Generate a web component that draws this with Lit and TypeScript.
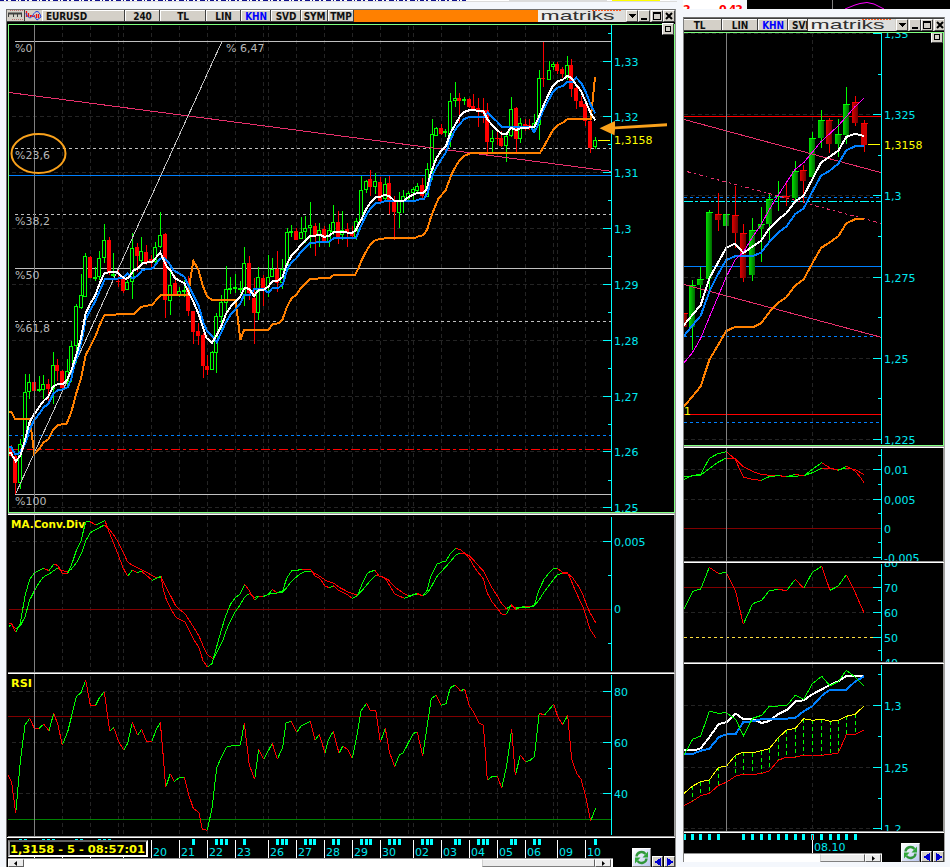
import { LitElement, html, svg, css } from "lit";
import { customElement, property } from "lit/decorators.js";

type Pt = [number, number];
type Bar = [string, number, number, number, number, number];

// Series are stored in thirds of a pixel relative to an origin.
const UNIT = 3;
const pts = (ox: number, oy: number, s: string): Pt[] =>
  s.trim().split(/\s+/).map((p) => {
    const [x, y] = p.split(",").map(Number);
    return [ox + x / UNIT, oy + y / UNIT] as Pt;
  });
const bars = (ox: number, oy: number, s: string): Bar[] =>
  s.trim().split(/\s*;\s*/).filter(Boolean).map((row) => {
    const f = row.split(/[\s,]+/);
    const n = f.slice(1).map(Number);
    return [f[0], ox + Math.floor(n[0] / UNIT), ...n.slice(1).map((v) => Math.round(oy + v / UNIT))] as unknown as Bar;
  });
const path = (p: Pt[]) => p.map(([x, y], i) => (i ? "L" : "M") + x.toFixed(1) + " " + y.toFixed(1)).join("");
const line = (p: Pt[], cls: string) => svg`<path class=${"ln " + cls} d=${path(p)}></path>`;
const trend = (p: Pt[]) => {
  let up = "", down = "", rising = true;
  for (let i = 1; i < p.length; i++) {
    const dy = p[i][1] - p[i - 1][1];
    if (Math.abs(dy) > 0.01) rising = dy < 0;
    const seg = path([p[i - 1], p[i]]);
    if (rising) up += seg; else down += seg;
  }
  return svg`<path class="ln up" d=${up}></path><path class="ln down" d=${down}></path>`;
};
const hl = (x1: number, x2: number, y: number, cls: string) => svg`<line class=${cls} x1=${x1} x2=${x2} y1=${y + 0.5} y2=${y + 0.5}></line>`;
const vl = (x: number, y1: number, y2: number, cls: string) => svg`<line class=${cls} x1=${x + 0.5} x2=${x + 0.5} y1=${y1} y2=${y2}></line>`;
const label = (x: number, y: number, t: string, cls = "cy") => svg`<text class=${cls} x=${x} y=${y}>${t}</text>`;
const title = (x: number, y: number, w: number, t: string) => svg`<text class="b" x=${x} y=${y} textLength=${w} lengthAdjust="spacingAndGlyphs">${t}</text>`;
const axis = (x: number, y1: number, y2: number, major: number[], minor: number[]) => svg`
  ${vl(x, y1, y2, "axis")}
  ${major.map((y) => hl(x - 8, x, y, "axis"))}
  ${minor.map((y) => hl(x - 3, x, y, "axis"))}`;

const GRID_X = [62, 90, 118, 123, 151, 179, 207, 235, 263, 268, 296, 324, 352, 380, 408, 413, 441, 469, 497, 525, 553, 557, 585];

const LEFT_BARS: Bar[] = [
  ...bars(0, 200, `r 33 735 740 768 772; r 47 762 768 850 883; g 61 718 733 848 868; g 75 522 577 725 735; g 89 522 547 575 598;
  r 103 547 547 572 572; g 117 528 568 572 576; g 131 525 553 570 598; r 145 537 552 567 607; g 159 457 495 567 613; r 173 477 495 514 543;
  r 187 510 514 565 570; g 201 477 514 545 560; g 215 422 438 514 545; g 229 312 319 438 490; g 243 222 286 325 328; g 257 160 168 290 290;
  r 272 168 171 233 233; g 285 200 230 233 243; g 299 154 174 230 240; g 313 72 121 175 190; r 327 110 121 220 225; g 341 160 221 227 232;
  r 355 205 242 245 260; r 369 235 238 272 280; g 383 240 247 269 270; g 397 98 145 247 298; r 411 130 141 168 215; g 425 110 153 182 190;
  r 439 135 156 185 195; r 453 165 177 185 205; g 467 125 142 186 195; g 481 37 106 140 145; r 495 98 102 301 355; g 510 210 255 302 345;
  r 525 227 250 283 283; g 539 262 273 284 290; g 553 240 270 274 292; r 566 228 260 333 348; r 580 333 333 395 433; r 595 370 394 407 435;
  r 609 400 405 497 533; r 621 465 497 510 526; g 636 453 457 509 509; g 650 340 348 460 518; g 664 285 307 350 390; g 678 198 268 308 335`),
  ...bars(200, 190, `g 92 260 294 297 312; g 106 252 292 296 308; g 120 272 293 296 310; g 134 170 219 316 348; r 148 198 219 310 330; r 162 263 323 368 461;
  g 176 232 262 370 390; r 190 255 264 300 348; g 205 195 261 292 320; g 218 205 236 262 262; r 233 183 236 278 305; g 247 207 236 278 297;
  g 261 113 127 240 240; g 275 105 124 127 140; r 289 114 122 150 150; g 303 82 125 148 148; g 317 78 114 125 158; g 331 36 106 115 173;
  r 345 98 108 138 197; g 359 100 121 137 170; r 373 108 117 158 158; g 387 103 121 155 170; g 401 45 97 125 135; r 415 62 97 145 162;
  g 428 62 121 134 150; r 442 100 118 125 170; r 457 107 125 138 140; g 470 85 94 142 150; g 484 -42 1 94 94; g 498 -30 -27 1 8;
  r 511 -60 -33 -10 18; g 526 -50 -27 -10 12; r 541 -40 -24 33 36; g 556 -36 -18 28 32; r 569 -42 -22 30 72; r 583 18 32 66 149;
  g 597 5 32 68 114; g 611 0 18 36 68; g 625 4 8 28 30; g 639 -8 -2 8 30; g 653 -20 -12 2 10`),
  ...bars(420, 30, `r 7 445 465 497 505; g 21 400 418 500 500; g 36 267 313 420 450; g 49 290 295 317 317; r 63 283 294 312 315; g 77 297 304 310 322;
  g 91 190 213 318 350; g 105 156 205 214 230; r 119 190 205 212 278; g 133 200 207 212 225; r 147 203 207 231 235; r 161 192 228 236 240;
  r 175 205 235 245 290; r 189 205 240 250 278; r 203 220 240 335 377; g 217 300 325 335 367; r 232 296 323 326 345; r 245 303 324 347 352;
  g 260 310 318 347 395; g 274 200 238 317 320; r 288 230 234 327 366; g 302 263 280 328 340; r 316 267 282 292 302; r 329 267 285 290 300;
  g 343 252 280 292 310; g 357 120 144 285 330; r 371 35 144 148 170; g 387 93 121 149 150; g 399 96 103 111 120; r 413 95 102 123 133;
  r 428 110 118 131 145; g 442 78 105 140 150; r 455 88 105 176 200; r 469 170 175 213 237; r 483 197 213 230 230; r 497 218 222 272 287;
  r 512 268 272 353 368; g 526 320 331 352 357`),
];

const WHITE: Pt[] = [
  ...pts(0, 200, `27,760 33,760 47,783 61,768 75,720 89,665 103,642 117,622 131,602 145,590 159,560 173,552 190,552 201,540 215,508 229,465 243,415 257,340 272,308 285,288 299,250 313,220 327,217 350,216 363,228 377,237 387,232 400,212 413,206 427,190 457,185 470,170 481,157 492,182 500,200 512,212 525,235 553,250 567,280 580,305 597,345`),
  ...pts(200, 190, `9,413 20,445 36,458 50,435 64,408 78,372 92,350 106,335 120,322 134,293 148,297 162,318 176,300 190,300 205,290 218,273 233,272 247,262 261,222 275,196 289,182 303,165 317,150 331,138 345,137 360,134 373,141 387,137 402,126 425,127 456,128 466,122 476,102 484,90 498,58 512,37 526,22 541,20 556,14 570,20 583,32 597,33 611,32 627,20 641,13 655,8`),
  ...pts(420, 30, `0,489 10,489 21,475 32,430 49,385 63,363 77,350 91,310 105,285 119,260 133,246 147,241 189,242 203,270 217,285 232,300 245,312 260,312 272,293 288,300 302,295 343,291 357,260 371,225 387,190 399,167 413,154 428,149 442,137 455,145 469,165 483,183 497,215 512,250 526,270`),
];
const BLUE: Pt[] = [
  ...pts(0, 200, `27,740 33,740 45,762 55,762 68,745 78,725 90,685 103,660 117,642 131,622 145,612 159,583 173,570 190,568 203,562 213,540 222,500 238,450 250,400 257,358 272,328 285,305 299,272 315,237 340,236 370,235 383,220 395,233 403,233 415,225 427,210 458,205 480,176 493,173 505,187 520,210 553,230 567,260 581,287 596,318`),
  ...pts(200, 190, `10,397 22,425 36,438 50,457 64,427 78,396 92,373 106,358 120,343 132,315 150,314 162,298 190,298 205,308 218,293 236,293 249,282 262,237 275,217 289,205 303,185 317,171 331,159 355,157 385,156 402,144 440,144 468,144 482,110 497,78 512,54 527,39 541,38 556,33 585,34 645,33`),
  ...pts(420, 30, `0,507 12,507 23,488 35,440 50,410 63,390 77,368 91,330 105,300 119,282 133,267 147,261 192,261 203,248 217,262 232,275 245,291 333,291 342,307 352,290 362,258 378,225 399,185 413,173 428,168 442,156 460,155 469,143 483,158 497,185 512,225 526,250`),
];
const ORANGE: Pt[] = [
  ...pts(0, 200, `27,637 35,637 45,656 90,657 95,700 103,763 117,748 131,727 145,718 159,690 173,675 200,671 215,632 229,580 243,535 257,465 272,437 285,412 299,375 313,346 340,344 371,342 402,341 425,320 457,314 481,286 565,285 572,230 580,183 595,208`),
  ...pts(200, 190, `8,287 22,320 36,330 106,330 114,390 121,450 132,420 206,419 218,402 236,400 247,390 261,350 275,325 289,314 303,294 317,280 331,267 390,263 402,254 465,254 474,238 484,212 498,185 512,162 527,150 560,144 645,144 655,139 670,136 682,118`),
  ...pts(420, 30, `30,570 42,538 55,507 77,480 93,437 105,413 119,390 133,377 155,369 360,369 371,350 387,322 399,300 413,285 428,278 443,267 512,267 518,210 525,140`),
];
const MACD_FAST: Pt[] = [
  ...pts(0, 510, `27,340 35,341 47,367 61,340 75,258 89,208 103,189 117,182 131,175 147,182 161,163 173,166 187,190 203,190 215,163 229,122 243,92 257,35 270,35 287,44 299,40 315,32 327,65 341,100 355,135 369,173 383,199 397,181 411,188 425,184 439,196 457,211 470,205 483,199 490,240 500,272 512,295 526,320 540,329 555,335 567,360 581,388 597,413 609,452 622,471 636,461 650,410 664,360 678,315 692,282 706,263 720,253 734,223 748,242 764,271 776,258 790,260 805,253 817,239 832,248 848,242 860,205 876,181 892,181 905,178 933,179 945,198 960,206 975,228 988,233 1000,227`),
  ...pts(330, 510, `25,240 40,248 55,256 67,265 82,258 95,225 110,193 120,185 135,181 147,198 166,205 180,228 194,253 208,258 223,265 235,261 262,250 278,258 292,240 302,200 320,163 334,157 348,153 360,132 378,115 392,120 406,131 418,145 435,175 460,206 472,250 486,275 502,295 515,313 529,313 544,284 558,298 570,292 600,291 613,286 627,240 642,208 658,188 671,175 682,175 697,187 712,187 722,208 735,240 748,268 760,292 770,325 780,358 797,383`),
];
const MACD_SLOW: Pt[] = [
  ...pts(0, 510, `27,349 35,343 47,357 61,348 75,320 89,270 103,243 117,218 131,200 147,192 161,182 173,174 187,182 203,186 217,175 231,155 245,128 257,92 271,68 285,60 313,45 327,57 341,75 355,97 369,125 383,157 397,165 425,179 440,187 455,196 470,203 483,201 495,225 512,258 526,285 540,300 555,311 567,330 581,352 597,378 609,407 622,434 640,446 652,425 670,387 685,345 706,305 720,285 734,260 748,251 764,262 776,259 790,259 817,250 846,248 860,233 876,212 900,192 915,185 933,184 950,193 980,213`),
  ...pts(330, 510, `10,219 30,233 55,246 82,256 95,243 120,213 138,196 152,199 172,206 194,231 223,251 235,257 262,252 278,257 292,250 305,228 320,200 350,167 378,135 390,130 406,131 418,137 435,155 460,183 486,233 502,258 515,281 529,296 542,288 558,293 585,290 610,291 627,270 642,247 658,225 682,194 697,190 713,191 727,202 745,228 757,250 770,285 780,308 797,338`),
];
const RSI: Pt[] = [
  ...pts(0, 670, `24,316 35,338 47,430 61,275 75,165 89,145 103,175 117,175 131,163 147,182 161,130 173,162 187,225 203,185 215,137 229,80 243,68 257,31 271,105 287,105 299,82 313,65 329,184 341,173 355,212 371,241 383,220 397,157 413,196 425,178 439,213 455,216 467,182 481,157 490,260 497,352 511,311 523,334 540,322 553,322 567,377 580,415 597,428 607,478 622,481 636,415 650,293 664,262 680,230 706,226 721,226 733,160 748,285 764,328 776,238 791,268 817,220 832,268 848,232 858,158 874,154 890,187 903,168 931,154 945,211 958,193 975,249 985,210 1000,184 1017,250`),
  ...pts(330, 670, `38,229 53,238 67,265 80,200 93,122 110,100 121,121 137,121 151,217 166,175 178,245 194,290 208,255 220,248 250,190 262,187 278,257 292,165 304,85 319,76 334,106 348,101 361,53 376,45 391,62 404,58 418,107 432,128 446,158 460,165 465,230 472,330 488,319 502,319 515,354 530,287 545,178 556,316 571,256 587,275 600,271 613,261 628,129 643,136 671,103 683,140 698,164 713,136 725,268 740,310 753,327 767,380 782,453 797,414`),
];

const RIGHT_BARS = bars(680, 30, `r 12 850 850 890 890; g 36 750 766 890 960; g 62 710 747 766 803; g 88 540 546 747 785; r 114 488 551 569 603; g 139 552 552 588 620;
  r 165 468 555 610 655; r 190 582 609 743 755; g 217 563 600 735 752; g 243 532 583 597 697; g 267 492 507 582 630; g 295 453 498 502 543; r 319 458 497 503 527;
  g 345 393 423 503 515; r 371 405 420 452 518; g 397 306 324 441 443; g 423 240 270 323 353; r 448 265 270 343 368; g 475 267 312 343 380; g 499 171 222 315 342;
  r 525 198 215 280 288; r 552 270 279 346 365`);
const R = (s: string) => pts(680, 30, s);
const Q = (s: string) => pts(680, 440, s);
const CLOUD_TOP = Q(`12,1060 38,1038 62,1025 88,1020 116,982 139,979 167,945 190,937 218,938 245,932 268,926 295,893 320,870 346,865 371,836 397,841 425,838 450,844 475,841 499,829 525,823 552,798`);
const CLOUD_BOTTOM = Q(`12,1097 38,1083 62,1067 88,1060 116,1036 139,1027 167,1008 190,1003 218,1004 245,1000 268,993 295,961 320,951 346,952 371,945 397,945 425,946 450,943 475,939 499,884 525,883 552,871`);

const chartStyles = css`
  svg { display: block; }
  .plot { shape-rendering: crispEdges; }
  text { font: 11px "DejaVu Sans", sans-serif; }
  line, .ln { stroke-width: 1; fill: none; }
  .grid { stroke: #242424; stroke-dasharray: 4 3; }
  .axis { stroke: #00ffff; }
  .cross { stroke: #808080; }
  .fib { stroke: #c0c0c0; }
  .fibd { stroke: #c0c0c0; stroke-dasharray: 3 3; }
  .bl { stroke: #0080ff; }
  .bld { stroke: #0080ff; stroke-dasharray: 3 3; }
  .rd { stroke: #f00; }
  .rdd { stroke: #f00; stroke-dasharray: 9 3 3 3; }
  .cyd { stroke: #00ffff; stroke-dasharray: 9 2 3 2; }
  .mar { stroke: #800000; }
  .dgr { stroke: #008000; }
  .yel { stroke: #ffff00; }
  .yed { stroke: #ffe040; stroke-dasharray: 3 3; }
  .pink { stroke: #e8306c; }
  .pinkd { stroke: #e8306c; stroke-dasharray: 4 3 2 3; }
  .mag { stroke: #ff00ff; }
  .up { stroke: #00ff00; }
  .down { stroke: #ff0000; }
  .w2 { stroke: #fff; stroke-width: 2; }
  .b2 { stroke: #0080ff; stroke-width: 2; }
  .o2 { stroke: #ff8000; stroke-width: 2; }
  .cloud { stroke: #00ff00; stroke-dasharray: 4 3; }
  .cy { fill: #00e8f0; }
  .ye { fill: #ffff00; }
  .si { fill: #b8b8b8; }
  .b { font-weight: bold; font-size: 10.5px; fill: #ffff00; }
  .g-wick, .g-body { stroke: #00ff00; }
  .g-body { fill: #000; }
  .r-wick { stroke: #f00; }
  .r-body { fill: #f00; }
  .sep { stroke: #fff; }
  .mark { fill: #00ffff; }
  .note { fill: none; stroke: #f9a11b; stroke-width: 2; }
  .arrow { fill: #f9a11b; }
`;

@customElement("window-button")
class WindowButton extends LitElement {
  @property() kind = "close";
  static styles = css`
    :host { display: block; box-sizing: border-box; width: 12px; height: 12px; background: #d4d0c8; border: 1px solid; border-color: #fff #404040 #404040 #fff; }
    svg { display: block; width: 10px; height: 10px; shape-rendering: crispEdges; }
    path { fill: none; stroke: #000; }
    .solid { fill: #000; stroke: none; }
    .heavy { stroke-width: 2; shape-rendering: auto; }
    .blue { fill: #0000d0; stroke: none; }
  `;
  render() {
    const shape: Record<string, unknown> = {
      down: svg`<path class="solid" d="M1 3h8L5 7z"></path>`,
      min: svg`<path class="heavy" d="M2 8h6"></path>`,
      max: svg`<path d="M1.500 1.500h7v7h-7z M1.500 2.500h7"></path>`,
      close: svg`<path class="heavy" d="M2 2l6 6M8 2l-6 6"></path>`,
      box: svg`<path d="M2.5 2.5h5v5h-5z"></path>`,
      left: svg`<path class="blue" d="M8 1v8L1 5z"></path>`,
      right: svg`<path class="blue" d="M2 1v8l7-4z"></path>`,
    };
    return html`<svg viewBox="0 0 10 10">${shape[this.kind]}</svg>`;
  }
}

@customElement("brand-logo")
class BrandLogo extends LitElement {
  static styles = css`
    :host { display: block; width: 87px; height: 12px; background: linear-gradient(90deg, #f0f0ee, #dcdcda); flex: none; }
    svg { display: block; }
    text { font: 13px "Liberation Sans", sans-serif; fill: #303030; }
    line { stroke: #ff5a1e; stroke-dasharray: 2 1; }
  `;
  render() {
    return html`<svg width="87" height="12"><text x="2.500" y="10.3" textLength="74" lengthAdjust="spacingAndGlyphs">matriks</text><line x1="54" x2="84" y1=".5" y2=".5"></line></svg>`;
  }
}

@customElement("tool-strip")
class ToolStrip extends LitElement {
  @property({ type: Array }) tabs: [string, number, number?][] = [];
  @property({ type: Boolean }) full = false;
  static styles = css`
    :host { display: flex; box-sizing: border-box; height: 13px; background: #404040; padding: 1px 0 0 0; }
    .tab { box-sizing: border-box; height: 11px; margin-right: 1px; flex: none; background: #d4d0c8; border-left: 1px solid #fff; border-top: 1px solid #fff; font: bold 10px/12px "DejaVu Sans Condensed", "DejaVu Sans", sans-serif; font-stretch: condensed; letter-spacing: -0.1px; text-align: center; color: #101010; overflow: hidden; white-space: nowrap; }
    .hot { color: #0000ff; }
    .name { text-align: left; padding-left: 3px; }
    .fill { flex: 1; background: #ff8000; }
    .icon { display: block; height: 11px; width: 17px; background: #d4d0c8; flex: none; margin-right: 1px; }
    .ink { fill: none; stroke: #404040; }
    .bar { fill: none; stroke: #404040; stroke-width: 2; }
    .pinkish { stroke: #c07070; stroke-dasharray: 1 1; }
    .red { fill: none; stroke: #f01010; stroke-width: 1.3; }
    .blu { fill: none; stroke: #2040e0; }
    brand-logo { position: relative; }
    .keys { display: flex; flex: none; gap: 0.5px; background: #d4d0c8; padding-left: 1px; height: 12px; }
  `;
  render() {
    return html`
      ${this.full ? html`
        <svg class="icon" viewBox="0 0 17 11"><path class="pinkish" d="M3 .500h13M5 9.500h11"></path><path class="bar" d="M1 3.500h14"></path><path class="ink" d="M1.500 3v4M6.500 3v4M10.500 3v4M14.500 3v4"></path></svg>
        <svg class="icon" viewBox="0 0 17 11"><path class="red" d="M1.500 1v6M3.500 3v4M5.500 5v2M6 5.500l2 1 2-1"></path><path class="red" d="M11.500 4v4M13.500 4v4"></path><path class="blu" d="M1 3c2 6 5 6 7 2s6-6 8 2M9 6l3 4 4-3"></path></svg>` : ""}
      ${this.tabs.map(([t, w, pull]) => html`<div class=${"tab" + (t === "KHN" ? " hot" : "") + (t === "EURUSD" || w === 19 ? " name" : "")} style=${`width:${w}px;margin-left:${pull ?? 0}px`}>${t}</div>`)}
      ${this.full ? html`<div class="fill"></div>` : ""}
      <brand-logo></brand-logo>
      <div class="keys">${["down", "min", "max", "close"].map((k) => html`<window-button kind=${k}></window-button>`)}</div>`;
  }
}

@customElement("nav-footer")
class NavFooter extends LitElement {
  @property({ type: Number }) lead = 458;
  @property({ type: Number }) thumb = 112;
  @property({ type: Boolean }) start = false;
  static styles = css`
    :host { display: flex; height: 9px; background: #fff; border-top: 1px solid #909090; box-sizing: border-box; overflow: hidden; }
    .btn { box-sizing: border-box; width: 16px; flex: none; background: #ececec; border: 1px solid; border-color: #fff #606060 #606060 #fff; display: flex; justify-content: center; align-items: center; }
    .thumb { box-sizing: border-box; flex: none; background: #ececec; border: 1px solid; border-color: #fff #606060 #808080 #d0d0d0; }
    svg { width: 4px; height: 5px; display: block; }
  `;
  render() {
    return html`
      ${this.start ? html`<div class="btn"><svg viewBox="0 0 4 5"><path d="M3 0v5L0 2.500z"></path></svg></div>` : ""}
      <div style=${`width:${this.lead}px`}></div>
      <div class="thumb" style=${`width:${this.thumb}px`}></div>
      <div class="btn"><svg viewBox="0 0 4 5"><path d="M1 0v5L4 2.500z"></path></svg></div>`;
  }
}

@customElement("refresh-keys")
class RefreshKeys extends LitElement {
  static styles = css`
    :host { display: flex; align-items: flex-end; gap: 1px; }
    .refresh { box-sizing: border-box; width: 19px; height: 19px; border: 1px solid; border-color: #fff #808080 #808080 #fff; background: linear-gradient(135deg, #fff, #bcc8f0); }
    svg { display: block; width: 17px; height: 17px; }
    .arc { fill: none; stroke: #30963a; stroke-width: 2.4; }
    .tip { fill: #30a63a; }
    window-button { width: 11px; height: 11px; }
  `;
  render() {
    return html`<div class="refresh"><svg viewBox="0 0 17 17">
      <path class="arc" d="M3.500 7.500a5 4.800 0 0 1 9-2.500M13.500 9.500a5 4.800 0 0 1-9 2.500"></path>
      <path class="tip" d="M15 2.500v6H9.500zM2 14.500v-6h5.500z"></path></svg></div>
      <window-button kind="left"></window-button><window-button kind="right"></window-button>`;
  }
}

@customElement("main-chart")
class MainChart extends LitElement {
  static styles = [chartStyles, css`
    :host { display: block; }
    .price, .macd, .rsi { display: block; position: relative; background: #000; border-right: 1px solid #a0a0a0; }
    .price { box-sizing: border-box; height: 489px; border: 1px solid #80ff80; width: 667px; }
    .macd { height: 157px; border-top: 1px solid #fff; border-bottom: 1px solid #999; }
    .rsi { height: 162px; border-top: 1px solid #fff; border-bottom: 1px solid #999; }
    .corner { position: absolute; top: -2px; right: 0; }
    .gap { height: 1px; background: #a0a0a0; }
  `];
  render() {
    const gridX = (y1: number, y2: number) => GRID_X.map((x) => vl(x, y1, y2, "grid"));
    const gridY = (ys: number[]) => ys.map((y) => hl(12, 603, y, "grid"));
    return html`
      <div class="price">
        <svg width="665" height="487" viewBox="9 25 665 487">
          <g class="plot">
            ${gridX(26, 512)}${gridY([61, 116, 172, 228, 284, 340, 396, 451, 507])}
            ${hl(9, 611, 435, "bld")}${hl(9, 611, 449, "rdd")}
            ${[41, 268, 494].map((y) => hl(15, 611, y, "fib"))}${[148, 214, 321].map((y) => hl(15, 611, y, "fibd"))}
            ${hl(9, 611, 175, "bl")}
            ${LEFT_BARS.map(([c, x, h, t, b, l]) => svg`
              ${vl(x, h, Math.max(l, b), c + "-wick")}
              ${c === "g"
                ? svg`<rect class="g-body" x=${x - 1.5} y=${t + 0.5} width="3" height=${Math.max(1, b - t - 1)}></rect>`
                : svg`<rect class="r-body" x=${x - 2} y=${t} width="4" height=${Math.max(1, b - t)}></rect>`}`)}
            <line class="pink" x1="9" y1="92.500" x2="611" y2="171.300"></line>
            <line class="fib" x1="16" y1="493" x2="222" y2="41.500"></line>
            ${line(ORANGE, "o2")}${line(BLUE, "b2")}${line(WHITE, "w2")}
            ${vl(34, 25, 513, "cross")}
            ${axis(611, 25, 511, [61, 116, 172, 228, 284, 340, 396, 451, 507], [33, 89, 144, 200, 256, 312, 368, 424, 480])}
            ${hl(598, 610, 140, "yel")}
          </g>
          ${label(614, 66, "1,33")}${label(614, 121, "1,32")}${label(614, 177, "1,31")}${label(614, 233, "1,3")}${label(614, 289, "1,29")}
          ${label(614, 345, "1,28")}${label(614, 401, "1,27")}${label(614, 456, "1,26")}${label(614, 512, "1,25")}
          ${label(614, 144, "1,3158", "ye")}
          ${label(15, 52, "%0", "si")}${label(226, 52, "% 6,47", "si")}${label(15, 159, "%23,6", "si")}${label(15, 225, "%38,2", "si")}
          ${label(15, 279, "%50", "si")}${label(15, 332, "%61,8", "si")}${label(15, 505, "%100", "si")}
          <ellipse class="note" cx="38.500" cy="153.500" rx="27" ry="19.500"></ellipse>
          <path class="arrow" d="M599.500 128.300L615 121v5.600L667 123.300v3L615 129.200l-.5 6z"></path>
        </svg>
        <window-button class="corner" kind="box"></window-button>
      </div>
      <div class="gap"></div>
      <div class="macd">
        <svg width="666" height="157" viewBox="8 515 666 157">
          <g class="plot">
            ${gridX(516, 671)}${gridY([541])}${hl(9, 611, 609, "mar")}
          </g>
          ${title(11, 528, 74, "MA.Conv.Div")}
          <g class="plot">
            ${trend(MACD_SLOW)}${trend(MACD_FAST)}${vl(34, 515, 672, "cross")}
            ${axis(611, 517, 671, [541], [575, 643])}
          </g>
          ${label(614, 546, "0,005")}${label(614, 613, "0")}
        </svg>
      </div>
      <div class="rsi">
        <svg width="666" height="162" viewBox="8 674 666 162">
          <g class="plot">
            ${gridX(676, 835)}${gridY([691, 742, 793])}${hl(8, 611, 716, "mar")}${hl(8, 611, 819, "dgr")}
            ${trend(RSI)}${vl(34, 674, 836, "cross")}
            ${axis(611, 675, 835, [691, 742, 793], [768])}
          </g>
          ${title(11, 687, 21, "RSI")}${label(614, 696, "80")}${label(614, 747, "60")}${label(614, 798, "40")}
        </svg>
      </div>`;
  }
}

@customElement("side-chart")
class SideChart extends LitElement {
  static styles = [chartStyles, css`
    :host { display: block; }
    .pane { position: relative; background: #000; border-right: 1px solid #999; overflow: hidden; }
    .price { border-top: 1px solid #80ff80; border-bottom: 1px solid #80ff80; border-right-color: #80ff80; }
    .line { height: 2px; background: linear-gradient(#999 50%, #fff 50%); }
    .corner { position: absolute; top: -2px; right: 0; }
  `];
  render() {
    return html`
      <div class="pane price">
        <svg width="260" height="412" viewBox="684 33 260 412">
          <defs>
            <linearGradient id="gg"><stop offset="0" stop-color="#00e000"></stop><stop offset="1" stop-color="#006800"></stop></linearGradient>
            <linearGradient id="rg"><stop offset="0" stop-color="#e00000"></stop><stop offset="1" stop-color="#700000"></stop></linearGradient>
          </defs>
          <g class="plot">
            ${[33, 114, 195, 277, 358, 439].map((y) => hl(684, 873, y, "grid"))}${vl(812, 33, 445, "grid")}
            ${hl(684, 881, 116, "rd")}${hl(684, 881, 414, "rd")}${hl(684, 881, 266, "bl")}
            ${hl(684, 881, 197, "bld")}${hl(684, 881, 336, "bld")}${hl(684, 881, 422, "bld")}${hl(684, 881, 201, "cyd")}
            ${RIGHT_BARS.map(([c, x, h, t, b, l], i) => svg`
              ${vl(x, h, l, c + "-wick")}
              <rect fill=${i === RIGHT_BARS.length - 1 ? "#d00000" : c === "g" ? "url(#gg)" : "url(#rg)"} x=${x - 3} y=${t} width="6" height=${Math.max(1, b - t)}></rect>
              ${hl(x - 3, x + 4, t, c + "-wick")}`)}
            ${line(R("10,268 604,428"), "pink")}${line(R("10,763 604,922"), "pink")}${line(R("22,425 604,580"), "pinkd")}
            ${line(R(`10,1132 36,1101 62,1069 88,990 139,903 165,891 222,890 243,880 269,845 295,818 319,802 345,767 371,748 397,700 423,654 449,637 475,619 499,580 525,568 552,567`), "o2")}
            ${line(R(`10,920 36,888 62,857 88,785 112,736 139,690 165,679 217,679 243,668 269,634 295,607 319,590 345,553 371,535 397,485 423,437 449,422 475,401 499,361 525,349 552,347`), "b2")}
            ${line(R(`10,1001 36,970 62,925 88,862 114,800 139,740 165,690 190,667 217,622 243,585 267,540 295,495 345,418 371,398 423,335 475,287 499,260 525,230 552,205`), "mag")}
            ${line(R(`10,887 62,825 88,745 139,653 165,641 190,669 217,650 243,632 269,594 295,568 319,550 345,515 371,497 397,448 423,398 475,362 499,321 525,311 552,318`), "w2")}
            ${vl(726, 33, 445, "cross")}
            ${axis(881, 33, 444, [33, 114, 195, 277, 358, 439], [74, 155, 236, 317, 398])}
            ${hl(868, 880, 144, "yel")}
          </g>
          ${label(884, 38, "1,35")}${label(884, 119, "1,325")}${label(884, 200, "1,3")}${label(884, 282, "1,275")}${label(884, 363, "1,25")}${label(884, 444, "1,225")}
          ${label(884, 149, "1,3158", "ye")}${label(684, 415, "1", "ye")}
        </svg>
        <window-button class="corner" kind="box"></window-button>
      </div>
      <div class="line"></div>
      <div class="pane">
        <svg width="260" height="113" viewBox="684 448 260 113">
          <g class="plot">
            ${[469, 499, 557].map((y) => hl(684, 873, y, "grid"))}${vl(812, 448, 561, "grid")}${hl(684, 881, 528, "mar")}
            ${trend(Q(`12,110 36,108 62,105 88,86 112,68 139,54 165,55 190,80 217,94 243,103 270,106 300,107 319,110 371,107 397,98 425,85 450,86 475,89 499,85 525,88 552,104`))}
            ${trend(Q(`12,118 36,107 62,103 88,55 112,42 139,35 165,57 190,111 217,118 243,121 270,109 300,107 319,111 345,103 371,108 397,88 425,68 450,84 475,91 499,79 525,92 540,110 552,128`))}
            ${vl(726, 448, 561, "cross")}${axis(881, 449, 560, [469, 499, 557], [455, 484, 513, 542])}
          </g>
          ${label(884, 474, "0,01")}${label(884, 504, "0,005")}${label(884, 533, "0")}${label(884, 562, "-0.005")}
        </svg>
      </div>
      <div class="line"></div>
      <div class="pane">
        <svg width="260" height="99" viewBox="684 563 260 99">
          <g class="plot">
            ${hl(684, 873, 612, "grid")}${vl(812, 563, 662, "grid")}${hl(684, 881, 587, "mar")}${hl(684, 878, 637, "yed")}
            ${trend(Q(`12,507 38,454 62,447 88,382 116,401 139,397 167,455 190,553 218,491 245,481 268,452 295,448 320,452 346,418 371,445 397,397 425,379 450,451 475,438 499,404 525,457 552,518`))}
            ${vl(726, 563, 662, "cross")}${axis(881, 564, 661, [587, 612, 637], [575, 600, 625, 650])}
          </g>
          ${label(884, 567, "80")}${label(884, 592, "70")}${label(884, 617, "60")}${label(884, 642, "50")}${label(884, 667, "40")}
        </svg>
      </div>
      <div class="line"></div>
      <div class="pane">
        <svg width="260" height="167" viewBox="684 664 260 167">
          <g class="plot">
            ${[705, 767, 828].map((y) => hl(684, 873, y, "grid"))}${vl(812, 664, 831, "grid")}
            ${CLOUD_TOP.slice(1, -1).map(([x, y], i) => vl(Math.floor(x), y, CLOUD_BOTTOM[i + 1][1], "cloud"))}
            ${line(CLOUD_TOP, "yel")}${line(CLOUD_BOTTOM, "rd")}
            ${line(Q(`12,930 46,930 62,925 88,892 116,852 139,847 167,821 190,837 220,838 245,849 268,843 295,822 320,810 346,784 371,781 397,763 450,735 475,724 499,708 552,708`), "w2")}
            ${line(Q(`12,941 40,941 62,932 88,926 116,892 139,883 167,882 190,846 220,844 245,837 268,836 320,836 346,833 371,814 397,799 425,767 450,749 499,749 525,725 552,709`), "b2")}
            ${line(Q(`12,945 38,898 62,888 88,814 116,820 139,818 167,838 190,888 218,835 245,826 268,799 320,797 346,766 371,778 397,731 425,709 450,737 475,725 499,691 525,711 552,737`), "up")}
            ${vl(726, 664, 831, "cross")}${axis(881, 665, 830, [705, 767, 828], [674, 736, 798])}
          </g>
          ${label(884, 710, "1,3")}${label(884, 772, "1,25")}${label(884, 833, "1,2")}
        </svg>
      </div>
      <div class="line"></div>`;
  }
}

const DAYS: [number, string][] = [[151, "20"], [179, "21"], [207, "22"], [235, "23"], [268, "26"], [296, "27"], [324, "28"], [352, "29"], [380, "30"], [413, "02"], [441, "03"], [469, "04"], [497, "05"], [525, "06"], [557, "09"], [585, "10"]];
const MARKS = [19, 24, 42, 47, 52, 75, 80, 98, 103, 108, 192, 215, 220, 225, 243, 276, 281, 285, 304, 309, 313, 332, 337, 360, 365, 369, 388, 393, 398, 421, 426, 430, 454, 458, 477, 482, 486, 510, 514, 533, 538, 594];
const SIDE_MARKS = [683, 691, 699, 708, 717, 742, 751, 760, 768, 777, 785, 794, 802, 811, 820, 829, 837, 845, 854];

@customElement("app-root")
class AppRoot extends LitElement {
  static styles = [chartStyles, css`
    :host { display: flex; width: 950px; height: 867px; overflow: hidden; background: #f4f7fc; font-family: "DejaVu Sans", sans-serif; }
    .left { width: 683px; flex: none; }
    .right { width: 267px; flex: none; }
    .window { display: block; background: #000; box-sizing: border-box; }
    .left .window { margin-left: 6px; width: 670px; height: 858px; border-left: 1px solid #707070; border-right: 1px solid #909090; border-top: 1px solid #707070; }
    .left tool-strip { height: 12px; padding-top: 0; }
    .left main-chart { margin-left: 1px; width: 667px; padding-top: 2px; }
    .right .window { width: 262px; height: 845px; border-left: 1px solid #808080; border-right: 1px solid #a0a0a0; border-top: 1px solid #707070; }
    .right tool-strip { overflow: hidden; }
    .right side-chart { padding-top: 1px; }
    .foot { display: flex; position: relative; justify-content: space-between; }
    .left .foot { height: 29px; border-top: 1px solid #fff; }
    .right .foot { height: 29px; }
    .scale { flex: none; }
    .clock { position: absolute; left: 1px; top: 2px; box-sizing: border-box; width: 140px; height: 17px; border: 2px solid; border-color: #606060 #fff #fff #909090; background: #000; }
    .clocktext { font: bold 11px "DejaVu Sans", sans-serif; fill: #ff0; }
    .left nav-footer { width: 605px; margin-left: 1px; }
    .right nav-footer { width: 198px; }
    .top { display: block; }
    .ntext { stroke: #10108c; stroke-dasharray: 4 2 2 3 5 2 1 2; }
    .now { fill: #f00; }
    .redtext { fill: #f00; font: bold 11px "DejaVu Sans", sans-serif; }
    .white { fill: #fff; }
    .dark { fill: #000; }
    .pale { fill: #f4f7fc; }
    .silver { fill: #dcdcdc; }
    .yellow { fill: #ff0; }
  `];
  render() {
    return html`
      <div class="left">
        <svg class="top plot" width="683" height="9">
          <rect class="white" width="670" height="1"></rect>
          <line class="ntext" x1="0" x2="467" y1=".5" y2=".5"></line>
          <rect class="silver" y="1" width="677" height="1"></rect>
          <rect class="silver" x="509" width="98" height="1"></rect>
          <rect class="yellow" x="612" width="48" height="1"></rect>
        </svg>
        <div class="window">
          <tool-strip full .tabs=${[["EURUSD", 82, -1], ["240", 34], ["TL", 45], ["LIN", 34], ["KHN", 29], ["SVD", 29], ["SYM", 26], ["TMP", 25]]}></tool-strip>
          <main-chart></main-chart>
          <div class="foot">
            <div class="scale">
              <svg width="606" height="20" viewBox="7 838 606 20">
                <g class="plot">
                  ${MARKS.map((x) => svg`<rect class="mark" x=${x} y="839" width="3" height="6"></rect>`)}
                  ${[34, 62, 90, 123].map((x) => vl(x, 856, 858, "sep"))}
                  ${DAYS.map(([x]) => vl(x, 840, 858, "sep"))}
                </g>
                ${DAYS.map(([x, t]) => label(x + 2, 856, t))}
              </svg>
              <nav-footer start .lead=${458} .thumb=${113}></nav-footer>
            </div>
            <refresh-keys></refresh-keys>
            <div class="clock"><svg width="136" height="13"><text class="clocktext" x="0" y="10.500" textLength="135" lengthAdjust="spacingAndGlyphs">1,3158 - 5 - 08:57:01</text></svg></div>
          </div>
        </div>
      </div>
      <div class="right">
        <svg class="top" width="267" height="17">
          <rect class="white" width="57" height="9"></rect>
          <rect class="dark" x="64" width="203" height="9"></rect>
          <text class="redtext" x="0" y="13" textLength="7">2</text><text class="redtext" x="36" y="13" textLength="24">0.42</text>
          <path class="ln mag" d="M162 9l10-4 5-1.500 7-1 7 1.500 10 5"></path>
          ${vl(149, 0, 9, "cross")}
          <rect class="pale" y="9" width="267" height="8"></rect>
        </svg>
        <div class="window">
          <tool-strip .tabs=${[["TL", 44, -7], ["LIN", 35], ["KHN", 29], ["SVD", 19]]}></tool-strip>
          <side-chart></side-chart>
          <div class="foot">
            <div class="scale">
              <svg width="198" height="20" viewBox="684 833 198 20">
                <g class="plot">
                  ${SIDE_MARKS.map((x) => svg`<rect class="mark" x=${x} y="834" width="3" height="6"></rect>`)}
                  <rect class="now" x="812" y="835" width="1" height="5"></rect>
                  ${vl(812, 840, 853, "sep")}
                </g>
                ${label(814, 851, "08.10")}
              </svg>
              <nav-footer .lead=${136} .thumb=${45}></nav-footer>
            </div>
            <refresh-keys></refresh-keys>
          </div>
        </div>
      </div>`;
  }
}
